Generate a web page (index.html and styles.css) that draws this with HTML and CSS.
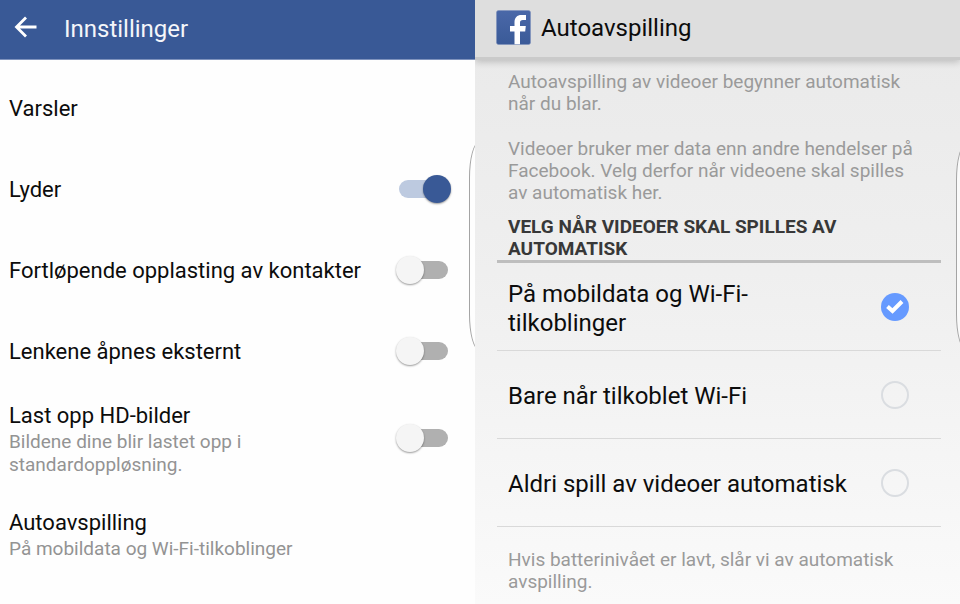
FILE: index.html
```
<!DOCTYPE html>
<html lang="no">
<head>
    <meta charset="UTF-8" />
    <meta name="viewport" content="width=device-width, initial-scale=1.0" />
    <title>Innstillinger</title>
    <link rel="stylesheet" href="styles.css">
</head>
<body>
    <section class="pane settings">
        <header class="settings-header">
            <button class="back" type="button" aria-label="Tilbake">
                <svg width="24" height="24" viewBox="0 0 24 24" fill="none" stroke="#fff" stroke-width="2.8">
                    <path d="M12 1.500 2.500 11l9.500 9.500M2.500 11H22.500" />
                </svg>
            </button>
            <h1>Innstillinger</h1>
        </header>

        <div class="settings-list">
            <div class="row">
                <a class="title" href="#varsler">Varsler</a>
            </div>
            <div class="row">
                <label class="title" for="sounds">Lyder</label>
                <input class="switch" type="checkbox" id="sounds" checked />
            </div>
            <div class="row">
                <label class="title" for="contacts">Fortløpende opplasting av kontakter</label>
                <input class="switch" type="checkbox" id="contacts" />
            </div>
            <div class="row">
                <label class="title" for="links">Lenkene åpnes eksternt</label>
                <input class="switch" type="checkbox" id="links" />
            </div>
            <div class="row row-hd">
                <label for="hd">
                    <span class="title">Last opp HD-bilder</span>
                    <span class="sub">Bildene dine blir lastet opp i standardoppløsning.</span>
                </label>
                <input class="switch" type="checkbox" id="hd" />
            </div>
            <div class="row row-auto">
                <a href="#autoavspilling">
                    <span class="title">Autoavspilling</span>
                    <span class="sub">På mobildata og Wi-Fi-tilkoblinger</span>
                </a>
            </div>
        </div>
        <div class="edge edge-left"></div>
    </section>

    <section class="pane autoplay" id="autoavspilling">
        <header class="autoplay-header">
            <svg class="logo" width="35" height="35" viewBox="0 0 35 35">
                <defs>
                    <linearGradient id="blue" x1="0" y1="0" x2="0" y2="1">
                        <stop offset="0" stop-color="#4a68a8" />
                        <stop offset="1" stop-color="#3a5a98" />
                    </linearGradient>
                </defs>
                <rect x="0.5" y="0.5" width="34" height="34" rx="2" fill="url(#blue)" stroke="#7d90bc" stroke-width="0.6" />
                <path fill="#fff" d="M18.500 34.300V21.500H14V16h4.500v-3.500C18.500 7.500 21 5 25.500 5H30v5h-3c-2.200 0-3 .8-3 2.700V16h5.800l-.6 5.500H24v12.800z" />
            </svg>
            <h2>Autoavspilling</h2>
        </header>

        <div class="autoplay-body">
            <p>Autoavspilling av videoer begynner automatisk når du blar.</p>
            <p>Videoer bruker mer data enn andre hendelser på Facebook. Velg derfor når videoene skal spilles av automatisk her.</p>
            <h3>VELG NÅR VIDEOER SKAL SPILLES AV AUTOMATISK</h3>
            <div class="option">
                <label for="always">På mobildata og Wi-Fi-tilkoblinger</label>
                <span class="choice">
                    <input type="radio" name="autoplay" id="always" checked />
                    <svg class="tick" width="28" height="28" viewBox="0 0 28 28" fill="none" stroke="#fff" stroke-width="4">
                        <path d="M6.500 13.500 11.500 18 21 8.500" />
                    </svg>
                </span>
            </div>
            <div class="option">
                <label for="wifi">Bare når tilkoblet Wi-Fi</label>
                <span class="choice"><input type="radio" name="autoplay" id="wifi" /></span>
            </div>
            <div class="option">
                <label for="never">Aldri spill av videoer automatisk</label>
                <span class="choice"><input type="radio" name="autoplay" id="never" /></span>
            </div>
            <p class="note">Hvis batterinivået er lavt, slår vi av automatisk avspilling.</p>
        </div>
        <div class="edge edge-right"></div>
    </section>
</body>
</html>
```
FILE: styles.css
```
* {
    box-sizing: border-box;
}

body {
    font-family: Roboto, sans-serif;
    margin: 0;
    min-height: 100vh;
    display: grid;
    grid-template-columns: 95fr 97fr;
    color: #0c0c0c;
}

h1, h2, h3, p {
    margin: 0;
}

a {
    color: inherit;
    text-decoration: none;
}

.pane {
    position: relative;
    overflow: hidden;
}

.settings {
    background-color: #fefefe;
}

.settings-header {
    display: flex;
    align-items: center;
    gap: 26px;
    height: 60px;
    padding: 0 14px 3px;
    background-color: #395996;
    border-bottom: 1px solid #7f93bd;
    color: #f4f6fa;
}

.settings-header h1 {
    padding-top: 2px;
    font-size: 24px;
    font-weight: 400;
}

.back {
    display: flex;
    padding: 0;
    border: none;
    background: none;
    cursor: pointer;
}

.settings-list {
    padding: 7px 24px 7px 9px;
}

.row {
    display: flex;
    align-items: center;
    justify-content: space-between;
    gap: 24px;
    min-height: 81px;
}

.row-hd {
    padding: 9px 0;
}

.row-auto {
    padding: 22px 0;
}

.title {
    display: block;
    padding-top: 2px;
    font-size: 22px;
    line-height: 28px;
}

.sub {
    display: block;
    font-size: 19px;
    line-height: 23px;
    color: #939393;
}

.switch {
    appearance: none;
    position: relative;
    flex: none;
    width: 55px;
    height: 28px;
    margin: 0;
    cursor: pointer;
}

.switch::before {
    content: "";
    position: absolute;
    inset: 5px 3px;
    border-radius: 10px;
    background-color: #b0b0b0;
}

.switch::after {
    content: "";
    position: absolute;
    left: 0;
    top: 0;
    width: 28px;
    height: 28px;
    border-radius: 50%;
    background-color: #f5f5f5;
    box-shadow: 0 1px 2px rgba(0, 0, 0, 0.4);
}

.switch:checked::before {
    background-color: #bdcae0;
}

.switch:checked::after {
    left: auto;
    right: 0;
    background-color: #395996;
}

.autoplay {
    background: linear-gradient(#e9e9e9, #efefef 45%, #fafafa);
}

.autoplay-header {
    display: flex;
    align-items: center;
    gap: 10px;
    height: 60px;
    padding: 0 21px 3px;
    background-color: #dedede;
    border-bottom: 3px solid #cacaca;
    box-shadow: 0 2px 7px rgba(0, 0, 0, 0.2);
}

.autoplay-header h2 {
    padding-top: 2px;
    font-size: 24px;
    font-weight: 400;
}

.autoplay-body {
    padding: 11px 19px 11px 22px;
}

.autoplay-body p {
    padding: 0 24px 0 11px;
    margin-bottom: 23px;
    font-size: 19px;
    line-height: 22px;
    color: #9a9a9a;
}

.autoplay-body h3 {
    margin-top: -11px;
    padding: 0 11px;
    font-size: 19px;
    font-weight: 700;
    line-height: 22px;
    color: #383838;
    border-bottom: 3px solid #bebebe;
}

.option {
    display: flex;
    align-items: center;
    justify-content: space-between;
    gap: 22px;
    min-height: 88px;
    padding: 0 32px 0 11px;
    border-bottom: 1px solid #d9d9d9;
    font-size: 24px;
    line-height: 29px;
}

.option label {
    padding-top: 4px;
}

.choice {
    position: relative;
    display: flex;
    flex: none;
}

.choice input {
    appearance: none;
    width: 28px;
    height: 28px;
    margin: 0;
    border: 2px solid #dadde1;
    border-radius: 50%;
    cursor: pointer;
}

.choice input:checked {
    border: none;
    background-color: #669aff;
}

.tick {
    position: absolute;
    inset: 0;
    pointer-events: none;
}

.autoplay-body .note {
    margin: 22px 0 0;
}

/* curved screen edges */
.edge {
    position: absolute;
    width: 20px;
    border: 1px solid #a4a4a4;
    border-radius: 14px / 50px;
    pointer-events: none;
}

.edge-left {
    top: 142px;
    right: -14px;
    height: 208px;
}

.edge-right {
    top: 144px;
    right: -16px;
    height: 206px;
    background-color: #fafafa;
}
```
